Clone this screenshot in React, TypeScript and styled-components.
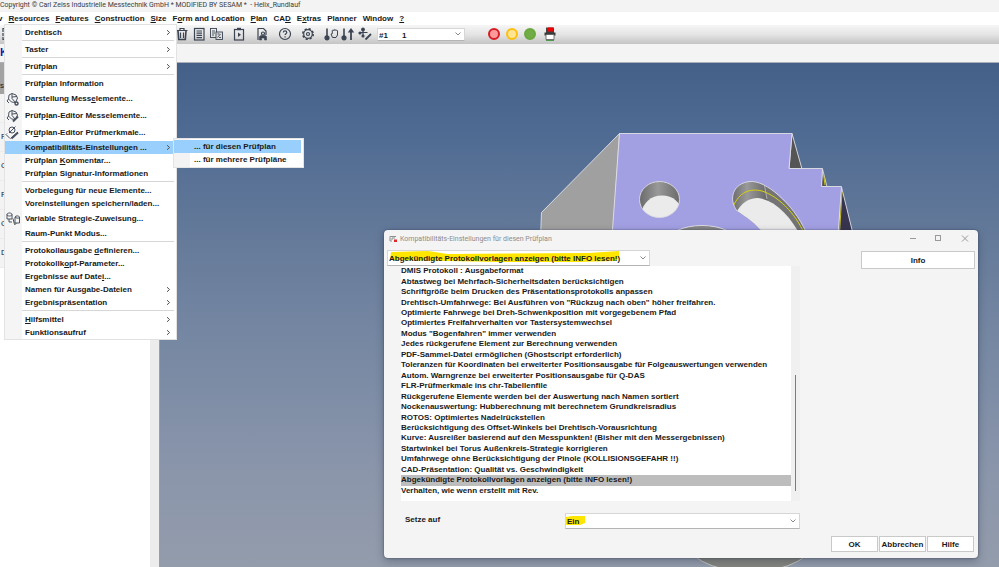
import React, { useState } from 'react';
import styled, { createGlobalStyle, css } from 'styled-components';

const GlobalStyle = createGlobalStyle`
  * { box-sizing: border-box; }
  body {
    margin: 0;
    background: #f3f3f3;
    color: #1a1a1a;
    font: bold 8px/13px "Liberation Sans", Arial, sans-serif;
    overflow: hidden;
  }
  button, select { font: inherit; color: inherit; }
`;

/* ---------- application shell ---------- */

const Window = styled.div`
  position: relative;
  display: flex;
  flex-direction: column;
  height: 100vh;
  overflow: hidden;
`;

const TitleBar = styled.header`
  flex: none;
  height: 12px;
  background: #f3f3f3;
  color: #3c3c3c;
  font: 7px/11px Roboto, sans-serif;
  white-space: pre;
`;

const MenuBar = styled.nav`
  flex: none;
  display: flex;
  gap: 6px;
  height: 13px;
  margin-left: -2px;
  background: #fff;
`;

const MenuBarButton = styled.button`
  padding: 0;
  border: 0;
  background: none;
  line-height: 13px;
  white-space: nowrap;
`;

const Mnemonic = styled.span`
  text-decoration: underline;
  text-underline-offset: 1px;
`;

const ToolBar = styled.div`
  flex: none;
  display: flex;
  align-items: center;
  height: 19px;
  padding-bottom: 1px;
  background: linear-gradient(#f6f6f6, #e4e4e4 50%, #c4c4c4);
`;

const ToolLead = styled.div`
  display: flex;
  width: 174px;
  padding-left: 2px;
  color: #3b4452;
`;

const ToolGroups = styled.div`
  display: flex;
  gap: 7px;
  color: #3b4452;
`;

const ToolGroup = styled.div`
  display: flex;
  gap: 1px;
`;

const IconButton = styled.button`
  display: flex;
  padding: 0;
  border: 0;
  background: none;
`;

const Lamps = styled.div`
  display: flex;
  align-items: center;
  gap: 6px;
  margin-left: 23px;
`;

const Lamp = styled.button<{ $ring: string; $fill: string }>`
  width: 12px;
  height: 12px;
  padding: 0;
  border: 2px solid ${p => p.$ring};
  border-radius: 50%;
  background: ${p => p.$fill};
`;

const InfoStrip = styled.div`
  flex: none;
  height: 19px;
  background: #f4f4f4;
  border-bottom: 1px solid #a9b0b8;
  color: #1414b4;
  font-size: 11px;
  line-height: 17px;
`;

const Workspace = styled.div`
  flex: 1;
  display: flex;
  min-height: 0;
`;

const SidePanel = styled.aside`
  flex: none;
  display: flex;
  width: 160px;
  background: #fff;
  border-right: 1px solid #9a9fa6;
`;

const SideTree = styled.div`
  flex: 1;
  font-weight: normal;
`;

const SideHeader = styled.div`
  height: 31px;
  padding-top: 16px;
  background: #a3a3a3;
`;

const SideRow = styled.div`
  height: 29px;
  padding-left: 1px;
  background: #f3f3f3;
  border-bottom: 1px solid #ececec;
  line-height: 28px;
`;

const SideScroll = styled.div`
  width: 9px;
  background: #ececec;
`;

const Viewport = styled.main`
  flex: 1;
  min-width: 0;
  background: linear-gradient(#446089, #4e6a92 13%, #667b9a 36%, #7788a3 56%, #8b96ab 82%, #939cab);
`;

const Scene = styled.svg`
  display: block;
  width: 100%;
  height: 100%;
`;

/* ---------- popup menus ---------- */

const MenuPopup = styled.div`
  position: absolute;
  top: 25px;
  left: 5px;
  width: 171px;
  padding-top: 1px;
  background: linear-gradient(90deg, #f5f5f5 17px, #fff 17px);
  box-shadow: 0 0 0 1px #e2e2e2;
`;

const MenuItem = styled.button<{ $tall?: boolean; $active?: boolean }>`
  display: grid;
  grid-template-columns: 17px 1fr 10px;
  column-gap: 3px;
  align-items: center;
  width: 100%;
  height: ${p => (p.$tall ? 17 : 13)}px;
  padding: 0;
  border: 0;
  background: ${p => (p.$active ? '#98cffc' : 'none')};
  text-align: left;
  white-space: nowrap;
`;

const MenuIcon = styled.span`
  display: flex;
  color: #4a5260;
`;

const Separator = styled.hr`
  height: 1px;
  margin: 1px 2px 2px 17px;
  border: 0;
  background: #d6d6d6;
`;

const SubMenu = styled.div`
  position: absolute;
  top: 139px;
  left: 174px;
  width: 129px;
  padding: 1px 2px 1px 0;
  background: linear-gradient(90deg, #f3f3f3 16px, #fff 16px);
  box-shadow: 0 0 0 1px #e4e4e4;
`;

const SubMenuItem = styled.button<{ $active?: boolean }>`
  display: block;
  width: 100%;
  height: 13px;
  padding: 0 0 0 20px;
  border: 0;
  background: ${p => (p.$active ? '#98cffc' : 'none')};
  text-align: left;
`;

/* ---------- dialog ---------- */

const Dialog = styled.section`
  position: absolute;
  top: 230px;
  left: 384px;
  right: 21px;
  padding: 0 3px 6px;
  border-radius: 4px;
  background: #f4f4f4;
  box-shadow: 0 0 2px rgba(30, 40, 60, 0.6), 0 3px 8px rgba(30, 40, 60, 0.35);
`;

const DialogTitle = styled.header`
  display: flex;
  align-items: center;
  gap: 3px;
  height: 17px;
  padding-left: 2px;
  color: #8c8c8c;
  font: 7px/16px Roboto, sans-serif;
`;

const DialogName = styled.h1`
  flex: 1;
  margin: 0;
  font: inherit;
`;

const WindowButtons = styled.div`
  display: flex;
  gap: 16px;
  padding-right: 5px;
`;

const DialogTop = styled.div`
  display: flex;
  justify-content: space-between;
  margin-top: 3px;
`;

const DialogButton = styled.button<{ $wide?: boolean }>`
  width: ${p => (p.$wide ? 114 : 47)}px;
  height: ${p => (p.$wide ? 18 : 16)}px;
  padding: 0;
  border: 1px solid #c9c9c9;
  background: #fff;
  line-height: 13px;
`;

const InfoSlot = styled.div`
  display: flex;
  height: 15px;
  padding-top: 1px;
`;

const ComboBox = styled.div<{ $size: 'wide' | 'mid' | 'small' }>`
  position: relative;
  display: flex;
  align-items: center;
  background: #fff;
  border: 1px solid #d6d6d6;
  border-bottom-color: #b4b4b4;
  ${p => p.$size === 'wide' && css`width: 263px; height: 16px;`}
  ${p => p.$size === 'mid' && css`width: 235px; height: 16px;`}
  ${p => p.$size === 'small' && css`width: 88px; height: 13px; margin-left: 4px;`}
`;

const Marker = styled.svg`
  position: absolute;
  top: 0;
  left: 0;
  width: 100%;
  height: 100%;
`;

const ComboSelect = styled.select`
  position: relative;
  width: 100%;
  height: 100%;
  padding: 0 14px 0 1px;
  border: 0;
  background: none;
  appearance: none;
  white-space: pre;
`;

const ComboArrow = styled.svg`
  position: absolute;
  right: 2px;
  color: #8a8a8a;
`;

const ListFrame = styled.div`
  display: flex;
  width: 399px;
  height: 235px;
  margin-left: 14px;
  background: #fff;
`;

const OptionList = styled.ul`
  flex: 1;
  display: grid;
  grid-auto-rows: 1fr;
  height: 230px;
  margin: 0;
  padding: 0;
  list-style: none;
`;

const Option = styled.li<{ $selected: boolean }>`
  display: flex;
  align-items: center;
  background: ${p => (p.$selected ? '#bdbdbd' : 'transparent')};
  line-height: 10px;
  white-space: nowrap;
`;

const ScrollTrack = styled.div`
  width: 9px;
  padding: 109px 4px 0;
  background: #f0f0f0;
`;

const ScrollThumb = styled.div`
  width: 1px;
  height: 116px;
  background: #7c7c7c;
`;

const ValueRow = styled.div`
  display: flex;
  margin: 12px 0 0 18px;
`;

const ValueLabel = styled.label`
  width: 160px;
  line-height: 13px;
`;

const DialogFooter = styled.footer`
  display: flex;
  justify-content: flex-end;
  gap: 1px;
  margin-top: 7px;
  padding-right: 1px;
`;

/* ---------- helpers ---------- */

function Label({ text }: { text: string }) {
  const at = text.indexOf('&');
  if (at < 0) return <span>{text}</span>;
  return (
    <span>
      {text.slice(0, at)}
      <Mnemonic>{text[at + 1]}</Mnemonic>
      {text.slice(at + 2)}
    </span>
  );
}

function Icon({ children }: { children: React.ReactNode }) {
  return (
    <svg width="16" height="16" viewBox="0 0 16 16" fill="none" stroke="currentColor" strokeWidth="1.2" aria-hidden="true">
      {children}
    </svg>
  );
}

const Chevron = () => (
  <svg width="5" height="7" viewBox="0 0 5 7" fill="none" stroke="#555" aria-hidden="true">
    <path d="M1 1.2 3.6 3.5 1 5.8" />
  </svg>
);

const Thermo = () => (
  <>
    <path d="M4 2.5V11" strokeWidth="1.6" />
    <circle cx="4" cy="11.8" r="2" fill="currentColor" />
  </>
);

type Tool = { name: string; art: React.ReactNode };

const toolGroups: Tool[][] = [
  [
    {
      name: 'Löschen',
      art: (
        <>
          <path d="M2.5 4.5h11M6 4V2.5h4V4" />
          <path d="M4 5l.7 8.5h6.6L12 5" strokeWidth="1.6" />
          <path d="M6.5 6.5V12M9.5 6.5V12" />
        </>
      ),
    },
    {
      name: 'Liste',
      art: (
        <>
          <rect x="3.5" y="2.5" width="9.5" height="11.5" />
          <path d="M5.5 5H11M5.5 7.2H11M5.5 9.4H11M5.5 11.6H11" />
        </>
      ),
    },
    {
      name: 'Fenster',
      art: (
        <g strokeWidth="0.9">
          <rect x="2.5" y="2.5" width="6" height="9" />
          <path d="M4 5h3M4 7h3M4 9h2" />
          <rect x="8" y="6" width="6.5" height="7.5" fill="#dedede" />
          <path d="M9.5 11.5l3-3.5M9.5 8h2M11 11.5h2" />
        </g>
      ),
    },
  ],
  [
    {
      name: 'Prüfplan starten',
      art: (
        <>
          <rect x="3.5" y="3.5" width="9" height="10.5" />
          <path d="M6 3h4" strokeWidth="2.4" />
          <path d="M7 6.5V11l3-2.2z" fill="currentColor" stroke="none" />
        </>
      ),
    },
  ],
  [
    {
      name: 'Protokoll',
      art: (
        <>
          <path d="M4 14V2.5h5.5L12 5v4" />
          <path d="M5.5 14V10.5l1.5-1h4l1.5 1V14h-2v-2h-3v2z" fill="currentColor" strokeWidth="0.6" />
          <circle cx="9" cy="7.5" r="1.5" />
        </>
      ),
    },
  ],
  [
    {
      name: 'Hilfe',
      art: (
        <>
          <circle cx="8" cy="8" r="5.5" />
          <path d="M6.3 6.6c0-2.2 3.5-2.2 3.5 0 0 1.2-1.7 1.2-1.7 2.5M8.1 10.3v1.3" />
        </>
      ),
    },
  ],
  [
    {
      name: 'Einstellungen',
      art: (
        <>
          <circle cx="8" cy="8" r="5.2" strokeDasharray="2.2 1.88" strokeWidth="1.6" />
          <circle cx="8" cy="8" r="4.3" />
          <circle cx="8" cy="8" r="1.5" />
        </>
      ),
    },
  ],
  [
    {
      name: 'Temperatur manuell',
      art: (
        <>
          <Thermo />
          <path d="M9.5 11.5L8 8l1.3-.3V4.5c.4-.8 1-.8 1.3 0 .3-1.3 1-1.3 1.3 0 .3-.9 1-.9 1.3 0 .3-.5 1-.5 1.3.3V9L13 11.500z" strokeWidth="1" />
        </>
      ),
    },
    {
      name: 'Temperatur',
      art: (
        <>
          <Thermo />
          <path d="M11 14V5" strokeWidth="1.8" />
          <path d="M7.8 6.5L11 2l3.2 4.500z" fill="currentColor" stroke="none" />
        </>
      ),
    },
    {
      name: 'Taster',
      art: (
        <>
          <path d="M6 3v7M2.500 6.500h8" />
          <circle cx="6" cy="3.500" r="1.300" fill="currentColor" />
          <circle cx="3" cy="7" r="1" fill="currentColor" />
          <circle cx="6" cy="10" r="1" fill="currentColor" />
          <path d="M8.500 13.500L14 8" strokeWidth="1.800" />
        </>
      ),
    },
  ],
];

const elementsGlyph = (
  <>
    <path d="M4 4l3-1.500 4 1.500 1.500 3-2 4.500-4-.5L3.500 8z" />
    <path d="M7 2.500v5l3.500 4M7 6l5-.5M3.500 8l-1.500 2 2 2" />
  </>
);

type Entry = { label: string; more?: boolean; icon?: React.ReactNode; active?: boolean } | null;

const resourceMenu: Entry[] = [
  { label: 'Drehtisch', more: true },
  null,
  { label: 'Taster', more: true },
  null,
  { label: 'Prüfplan', more: true },
  null,
  { label: 'Prüfplan Information' },
  {
    label: 'Darstellung Mess&elemente...',
    icon: (
      <g strokeWidth="1">
        {elementsGlyph}
        <circle cx="11.500" cy="12.500" r="1.500" fill="#f5f5f5" strokeWidth="1.500" />
      </g>
    ),
  },
  {
    label: 'Prüfp&lan-Editor Messelemente...',
    icon: (
      <g strokeWidth="1">
        {elementsGlyph}
        <path d="M8 13.500l5-5" strokeWidth="2" />
      </g>
    ),
  },
  {
    label: 'Pr&üfplan-Editor Prüfmerkmale...',
    icon: (
      <g strokeWidth="1">
        <circle cx="7" cy="5" r="3" />
        <path d="M4 8l6.500-6.500M2 8.500l-1 1 4 4M5.500 13.500L13 7" />
        <path d="M6.500 13.500L13 7.500" strokeWidth="2" />
      </g>
    ),
  },
  { label: 'Kompatibilitäts-Einstellungen ...', more: true, active: true },
  { label: 'Prüfplan &Kommentar...' },
  { label: 'Prüfplan Signatur-Informationen' },
  null,
  { label: 'Vorbelegung für neue Elemente...' },
  { label: 'Voreinstellungen speichern/laden...' },
  {
    label: 'Variable Strategie-Zuweisung...',
    icon: (
      <g strokeWidth="1">
        <path d="M2 3.500v4.500h5V3.500M2 3.500c0-2 5-2 5 0s-5 2-5 0" />
        <path d="M4 8v3h3M8 7.500l1.500 6 2-1M10 6v6h4.500V6M10 6c.5-1.500 4-1.500 4.500 0s-4 1.500-4.500 0" />
      </g>
    ),
  },
  { label: 'Raum-Punkt Modus...' },
  null,
  { label: 'Protokollausgabe &definieren...' },
  { label: 'Protokollk&opf-Parameter...' },
  { label: 'Ergebnisse auf Date&i...' },
  { label: 'Namen für Ausgabe-Dateien', more: true },
  { label: 'Ergebnispräsentation', more: true },
  null,
  { label: '&Hilfsmittel', more: true },
  { label: 'Funktionsaufruf', more: true },
];

const menuBar = ['&Resources', '&Features', '&Construction', '&Size', 'F&orm and Location', '&Plan', 'CA&D', 'E&xtras', 'Planner', 'Window', '&?'];

const options = [
  'DMIS Protokoll : Ausgabeformat',
  'Abtastweg bei Mehrfach-Sicherheitsdaten berücksichtigen',
  'Schriftgröße beim Drucken des Präsentationsprotokolls anpassen',
  'Drehtisch-Umfahrwege: Bei Ausführen von "Rückzug nach oben" höher freifahren.',
  'Optimierte Fahrwege bei Dreh-Schwenkposition mit vorgegebenem Pfad',
  'Optimiertes Freifahrverhalten vor Tastersystemwechsel',
  'Modus "Bogenfahren" immer verwenden',
  'Jedes rückgerufene Element zur Berechnung verwenden',
  'PDF-Sammel-Datei ermöglichen (Ghostscript erforderlich)',
  'Toleranzen für Koordinaten bei erweiterter Positionsausgabe für Folgeauswertungen verwenden',
  'Autom. Warngrenze bei erweiterter Positionsausgabe für Q-DAS',
  'FLR-Prüfmerkmale ins chr-Tabellenfile',
  'Rückgerufene Elemente werden bei der Auswertung nach Namen sortiert',
  'Nockenauswertung: Hubberechnung mit berechnetem Grundkreisradius',
  'ROTOS: Optimiertes Nadelrückstellen',
  'Berücksichtigung des Offset-Winkels bei Drehtisch-Vorausrichtung',
  'Kurve: Ausreißer basierend auf den Messpunkten! (Bisher mit den Messergebnissen)',
  'Startwinkel bei Torus Außenkreis-Strategie korrigieren',
  'Umfahrwege ohne Berücksichtigung der Pinole (KOLLISIONSGEFAHR !!)',
  'CAD-Präsentation: Qualität vs. Geschwindigkeit',
  'Abgekündigte Protokollvorlagen anzeigen (bitte INFO lesen!)',
  'Verhalten, wie wenn erstellt mit Rev.',
];

const Arrow = () => (
  <ComboArrow width="8" height="6" viewBox="0 0 8 6" fill="none" stroke="currentColor" aria-hidden="true">
    <path d="M1.500 1.500L4 4l2.500-2.500" />
  </ComboArrow>
);

function Part() {
  return (
    <Scene viewBox="160 63 839 504" preserveAspectRatio="xMidYMid slice" role="img" aria-label="CAD-Modell Helix_Rundlauf">
      <defs>
        <linearGradient id="bore">
          <stop offset="0" stopColor="#666" />
          <stop offset="0.45" stopColor="#999" />
          <stop offset="1" stopColor="#656565" />
        </linearGradient>
        <clipPath id="hole"><ellipse cx="659.5" cy="199.5" rx="20" ry="18" /></clipPath>
        <clipPath id="slot"><path d="M737 211C728 199 733 183 750 181.5C765 180 793 203 806 232L820 300H790C775 235 757 224 737 211Z" /></clipPath>
      </defs>
      <g strokeWidth="0.9" stroke="#e0e0e6">
        <path d="M619.5 133.5L541.5 212.5L540 250H612Z" fill="#a0a0a0" />
        <path d="M792 133.5L802 169H789Z" fill="#555" />
        <path d="M822.5 169L827 187H821Z" fill="#555" />
        <path d="M841.5 187L857 250H837Z" fill="#37344f" />
        <path d="M619.5 133.5H792L789 168.5H822.5L821.5 186.5H841.5L837 250H611Z" fill="#a29fe2" />
      </g>
      <path d="M842 192L838.5 250M823.5 174L825 185" stroke="#c8c020" fill="none" />
      <g clipPath="url(#hole)">
        <rect x="638" y="180" width="44" height="40" fill="url(#bore)" />
        <ellipse cx="662" cy="213" rx="20" ry="17.5" fill="#ebebeb" />
      </g>
      <ellipse cx="659.5" cy="199.5" rx="20" ry="18" fill="none" stroke="#dcdce6" strokeWidth="0.9" />
      <g clipPath="url(#slot)">
        <rect x="730" y="180" width="38" height="60" fill="url(#bore)" />
        <path d="M764 182L820 235V250H790L767 198Z" fill="#747474" />
        <path d="M736 213C741 203 749 198 758 198C775 200 790 215 803 240V300H740Z" fill="#ebebeb" />
        <path d="M764 183L767 199" stroke="#ddd" strokeWidth="0.6" />
        <path d="M733 207C739 192 750 188 762 191C778 196 795 213 804 233" fill="none" stroke="#d8cf18" />
      </g>
      <path d="M737 211C728 199 733 183 750 181.5C765 180 793 203 806 232" fill="none" stroke="#dcdce6" strokeWidth="0.9" />
      <ellipse cx="702" cy="241.5" rx="34" ry="16" fill="#858585" stroke="#dcdce6" />
      <ellipse cx="750" cy="535" rx="68" ry="37" fill="#84857f" stroke="#c8c8c4" />
    </Scene>
  );
}

export default function App() {
  const [selected, setSelected] = useState(20);

  return (
    <Window>
      <GlobalStyle />
      <TitleBar>Copyright © Carl Zeiss Industrielle Messtechnik GmbH * MODIFIED BY SESAM *  - Helix_Rundlauf</TitleBar>

      <MenuBar>
        <MenuBarButton>v</MenuBarButton>
        {menuBar.map(item => (
          <MenuBarButton key={item}><Label text={item} /></MenuBarButton>
        ))}
      </MenuBar>

      <ToolBar>
        <ToolLead>
          <Icon><path d="M1 6V2.500h4M1 7v3M1 11v2.500h4" /></Icon>
        </ToolLead>
        <ToolGroups>
          {toolGroups.map((group, i) => (
            <ToolGroup key={i}>
              {group.map(tool => (
                <IconButton key={tool.name} aria-label={tool.name}><Icon>{tool.art}</Icon></IconButton>
              ))}
            </ToolGroup>
          ))}
        </ToolGroups>
        <ComboBox $size="small">
          <ComboSelect aria-label="Taster">
            <option>{'#1\u2003\u2002\u00a01'}</option>
          </ComboSelect>
          <Arrow />
        </ComboBox>
        <Lamps>
          <Lamp $ring="#d41d24" $fill="#ff9a9a" aria-label="Rot" />
          <Lamp $ring="#fdbf10" $fill="#ffe493" aria-label="Gelb" />
          <Lamp $ring="#6aa83e" $fill="#70ad47" aria-label="Grün" />
          <IconButton aria-label="Drucken">
            <svg width="16" height="16" viewBox="0 0 16 16" aria-hidden="true">
              <path d="M4 8V1.5h8V8" fill="#444" />
              <rect x="6" y="1.5" width="5" height="4" fill="#f00000" />
              <path d="M2.5 6.500h11v3h-11z" fill="#3a3a3a" />
              <path d="M4 8.500h8v5H4z" fill="#fff" stroke="#555" strokeWidth="0.8" />
              <path d="M4 14.500h8" stroke="#4f9a4f" />
            </svg>
          </IconButton>
        </Lamps>
      </ToolBar>

      <InfoStrip>K</InfoStrip>

      <Workspace>
        <SidePanel>
          <SideTree>
            <SideHeader>s</SideHeader>
            <SideRow />
            {['F', 'C', 'F', 'C', 'D'].map((letter, i) => (
              <SideRow key={i}>{letter}</SideRow>
            ))}
          </SideTree>
          <SideScroll />
        </SidePanel>
        <Viewport><Part /></Viewport>
      </Workspace>

      <MenuPopup role="menu" aria-label="Resources">
        {resourceMenu.map((entry, i) =>
          entry ? (
            <MenuItem key={i} role="menuitem" $tall={!!entry.icon} $active={entry.active}>
              <MenuIcon>{entry.icon && <Icon>{entry.icon}</Icon>}</MenuIcon>
              <Label text={entry.label} />
              {entry.more && <Chevron />}
            </MenuItem>
          ) : (
            <Separator key={i} />
          ),
        )}
      </MenuPopup>

      <SubMenu role="menu" aria-label="Kompatibilitäts-Einstellungen">
        <SubMenuItem role="menuitem" $active>... für diesen Prüfplan</SubMenuItem>
        <SubMenuItem role="menuitem">... für mehrere Prüfpläne</SubMenuItem>
      </SubMenu>

      <Dialog role="dialog" aria-labelledby="dialog-title">
        <DialogTitle>
          <svg width="8" height="8" viewBox="0 0 8 8" fill="none" aria-hidden="true">
            <path d="M7 1.500H1V6h2M6 3H3v2" stroke="#8d8d8d" />
            <rect x="5" y="4.500" width="3" height="2.500" fill="#e02a2a" />
          </svg>
          <DialogName id="dialog-title">Kompatibilitäts-Einstellungen für diesen Prüfplan</DialogName>
          <WindowButtons>
            <IconButton aria-label="Minimieren">
              <svg width="10" height="10" viewBox="0 0 10 10" fill="none" stroke="#999"><path d="M2 4.500h6" /></svg>
            </IconButton>
            <IconButton aria-label="Maximieren">
              <svg width="10" height="10" viewBox="0 0 10 10" fill="none" stroke="#999"><rect x="1.500" y="1.500" width="5" height="5" /></svg>
            </IconButton>
            <IconButton aria-label="Schließen">
              <svg width="10" height="10" viewBox="0 0 10 10" fill="none" stroke="#999"><path d="M2 1.500l6 6M8 1.500l-6 6" /></svg>
            </IconButton>
          </WindowButtons>
        </DialogTitle>

        <DialogTop>
          <ComboBox $size="wide">
            <Marker viewBox="0 0 261 14" preserveAspectRatio="none" aria-hidden="true">
              <path d="M3 1L40 0L60 3L200 2L231 0V7L227 10L190 11H110L60 10L2 9Z" fill="#ffe600" />
            </Marker>
            <ComboSelect aria-label="Einstellung" value={options[selected]} onChange={e => setSelected(options.indexOf(e.target.value))}>
              {options.map(option => <option key={option}>{option}</option>)}
            </ComboSelect>
            <Arrow />
          </ComboBox>
          <InfoSlot><DialogButton $wide>Info</DialogButton></InfoSlot>
        </DialogTop>

        <ListFrame>
          <OptionList role="listbox" aria-label="Einstellungen">
            {options.map((option, i) => (
              <Option key={option} role="option" aria-selected={i === selected} $selected={i === selected} onClick={() => setSelected(i)}>
                {option}
              </Option>
            ))}
          </OptionList>
          <ScrollTrack><ScrollThumb /></ScrollTrack>
        </ListFrame>

        <ValueRow>
          <ValueLabel htmlFor="value">Setze auf</ValueLabel>
          <ComboBox $size="mid">
            <Marker viewBox="0 0 233 14" preserveAspectRatio="none" aria-hidden="true">
              <path d="M0 3L6 2H19V9L14 11H0Z" fill="#ffe600" />
            </Marker>
            <ComboSelect id="value" defaultValue="Ein">
              <option>Ein</option>
              <option>Aus</option>
            </ComboSelect>
            <Arrow />
          </ComboBox>
        </ValueRow>

        <DialogFooter>
          <DialogButton>OK</DialogButton>
          <DialogButton>Abbrechen</DialogButton>
          <DialogButton>Hilfe</DialogButton>
        </DialogFooter>
      </Dialog>
    </Window>
  );
}
